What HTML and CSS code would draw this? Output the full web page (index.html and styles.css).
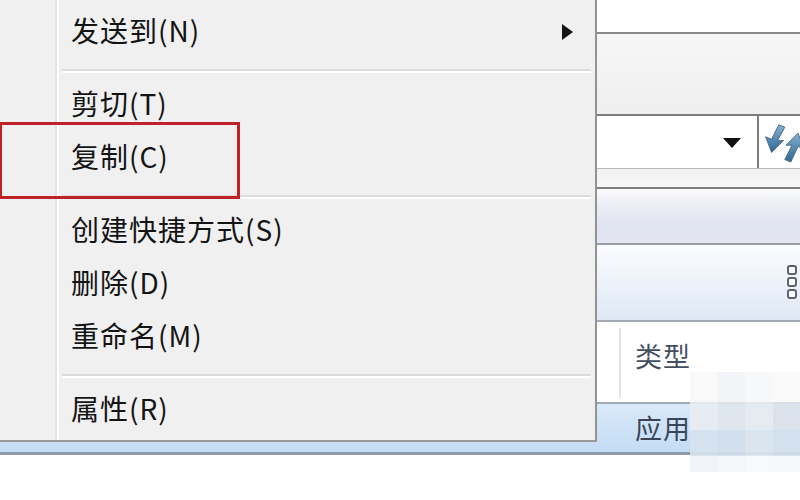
FILE: index.html
```html
<!DOCTYPE html>
<html lang="zh-CN">
<head>
<meta charset="utf-8">
<title>右键菜单</title>
<link rel="stylesheet" href="styles.css">
</head>
<body>
<div class="win">
  <div class="row-top"></div>
  <div class="row-toolbar"></div>
  <div class="row-addr">
    <div class="addr-field"><span class="drop"></span></div>
    <div class="addr-btn">
      <svg class="refresh" width="48" height="44" viewBox="0 0 40 36">
        <defs>
          <linearGradient id="ga" x1="0" y1="0" x2="0" y2="1">
            <stop offset="0" stop-color="#86b0cf"/>
            <stop offset="1" stop-color="#2d6894"/>
          </linearGradient>
        </defs>
        <path d="M14 2 L19 4 L13 15 L18 15 L8 25 L3 12 L8 14 Z" fill="url(#ga)" stroke="#4a6a84" stroke-width="0.8"/>
        <path d="M24 33 L19 31 L25 19 L20 19 L30 9 L35 22 L30 20 Z" fill="url(#ga)" stroke="#4a6a84" stroke-width="0.8"/>
      </svg>
    </div>
  </div>
  <div class="row-strip"></div>
  <div class="row-lav"></div>
  <div class="row-head"><span class="grip"><i></i><i></i><i></i></span></div>
  <div class="row-list">
    <div class="col-gap"></div>
    <div class="col-type">类型</div>
  </div>
  <div class="row-sel">
    <div class="col-gap2"></div>
    <div class="col-type2">应用</div>
  </div>
</div>

<div class="mosaic">
  <i style="background:#f8f9fa"></i><i style="background:#f1f3f6"></i><i style="background:#f5f7f9"></i><i style="background:#fafafa"></i>
  <i style="background:#e8edf2"></i><i style="background:#dfe6ed"></i><i style="background:#e6ebf0"></i><i style="background:#dbe2e9"></i>
  <i style="background:#d6e3ef"></i><i style="background:#d2deea"></i><i style="background:#dbe5ee"></i><i style="background:#d4e0eb"></i>
  <i style="background:#eff3f7"></i><i style="background:#f3f6f9"></i><i style="background:#f7f9fa"></i><i style="background:#f5f7f9"></i>
</div>

<div class="menu">
  <div class="gutter"></div>
  <div class="items">
    <div class="item first">发送到(N)<span class="sub"></span></div>
    <div class="sep"></div>
    <div class="item">剪切(T)</div>
    <div class="item">复制(C)</div>
    <div class="sep"></div>
    <div class="item">创建快捷方式(S)</div>
    <div class="item">删除(D)</div>
    <div class="item">重命名(M)</div>
    <div class="sep"></div>
    <div class="item">属性(R)</div>
  </div>
</div>

<div class="mark"></div>
</body>
</html>
```

FILE: styles.css
```css
html, body {
  margin: 0;
  padding: 0;
  width: 800px;
  height: 500px;
  overflow: hidden;
  background: #ffffff;
  font-family: "Noto Sans CJK SC", "Noto Sans", sans-serif;
}

.win {
  width: 800px;
  display: flex;
  flex-direction: column;
}

.row-top {
  height: 32px;
  background: #ffffff;
  border-bottom: 2px solid #8a8a8a;
}

.row-toolbar {
  height: 80px;
  background: linear-gradient(#f6f6f6, #efefef);
  border-bottom: 2px solid #7c7c7c;
}

.row-addr {
  height: 52px;
  display: flex;
  background: #ffffff;
  border-bottom: 1px solid #b9b9b9;
}

.addr-field {
  flex: 1;
  position: relative;
}

.drop {
  position: absolute;
  left: 723px;
  top: 22px;
  width: 0;
  height: 0;
  border-left: 9px solid transparent;
  border-right: 9px solid transparent;
  border-top: 10px solid #111111;
}

.addr-btn {
  width: 43px;
  border-left: 2px solid #7e7e7e;
  display: flex;
  align-items: center;
  padding-left: 3px;
  box-sizing: border-box;
  overflow: hidden;
}

.refresh {
  display: block;
  flex: none;
  margin-top: 4px;
}

.row-strip {
  height: 18px;
  background: linear-gradient(#f1f1f1, #f8f8f8);
  border-bottom: 2px solid #808080;
}

.row-lav {
  height: 54px;
  background: linear-gradient(#fbfbfd 0%, #eceef6 30%, #e0e3f0 70%, #e4e7f2 100%);
  border-bottom: 2px solid #9a9ca4;
}

.row-head {
  height: 75px;
  background: linear-gradient(#fbfcfe 0%, #eef3fa 45%, #dfe8f5 100%);
  border-bottom: 2px solid #a4abb3;
  position: relative;
}

.grip {
  position: absolute;
  left: 787px;
  top: 20px;
  display: flex;
  flex-direction: column;
  gap: 2px;
}

.grip i {
  display: block;
  width: 6px;
  height: 6px;
  border: 2px solid #5d636b;
  border-radius: 3px;
  background: #ffffff;
}

.row-list {
  height: 80px;
  display: flex;
  background: #ffffff;
}

.col-gap {
  width: 619px;
}

.col-type {
  border-left: 2px solid #e3e5e8;
  margin-top: 6px;
  height: 70px;
  padding-left: 14px;
  font-size: 27px;
  line-height: 56px;
  letter-spacing: 1px;
  color: #44505f;
}

.row-sel {
  height: 48px;
  display: flex;
  background: linear-gradient(#d9e9f9, #c4dcf4);
  border-top: 2px solid #a3acb6;
  border-bottom: 3px solid #8d9aa6;
}

.col-gap2 {
  width: 635px;
}

.col-type2 {
  font-size: 27px;
  line-height: 48px;
  letter-spacing: 1px;
  color: #3a4658;
}

.mosaic {
  position: absolute;
  left: 690px;
  top: 372px;
  width: 110px;
  height: 100px;
  display: grid;
  grid-template-columns: repeat(4, 1fr);
  grid-template-rows: 30px 28px 26px 16px;
}

.mosaic i {
  display: block;
  opacity: 0.92;
}

.menu {
  position: absolute;
  left: 0;
  top: 0;
  width: 595px;
  height: 440px;
  background: #f0f0f0;
  border-right: 2px solid #939393;
  border-bottom: 2px solid #9a9a9a;
  display: flex;
}

.gutter {
  width: 55px;
  border-right: 2px solid #e2e3e3;
  box-shadow: 2px 0 0 #ffffff;
  flex: none;
}

.items {
  flex: 1;
  padding-top: 4px;
  padding-left: 2px;
}

.item {
  height: 53px;
  line-height: 53px;
  padding-left: 12px;
  font-size: 28px;
  letter-spacing: 1px;
  color: #141414;
  position: relative;
}

.sub {
  position: absolute;
  left: 503px;
  top: 20px;
  width: 0;
  height: 0;
  border-top: 8px solid transparent;
  border-bottom: 8px solid transparent;
  border-left: 11px solid #151515;
}

.sep {
  height: 20px;
  box-sizing: border-box;
  padding-top: 12px;
  margin-left: 3px;
  margin-right: 4px;
}

.sep::before {
  content: "";
  display: block;
  height: 2px;
  background: #dcdcdc;
  border-bottom: 2px solid #ffffff;
}

.mark {
  position: absolute;
  left: 0;
  top: 122px;
  width: 235px;
  height: 71px;
  border: 3px solid #bf2329;
  border-left-width: 2px;
}
```
